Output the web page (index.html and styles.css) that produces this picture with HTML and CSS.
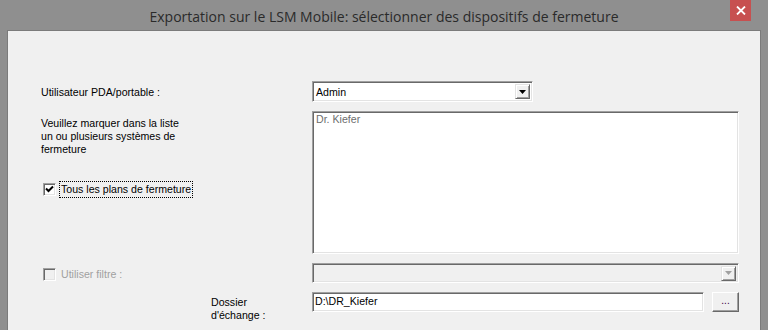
FILE: index.html
```html
<!DOCTYPE html>
<html lang="fr">
<head>
<meta charset="utf-8">
<title>Exportation sur le LSM Mobile</title>
<link rel="stylesheet" href="styles.css">
</head>
<body>
<div class="window">
  <div class="titlebar">
    <span class="title">Exportation sur le LSM Mobile: sélectionner des dispositifs de fermeture</span>
    <div class="close"><svg width="10" height="9" viewBox="0 0 10 9"><path d="M1 0.5 L9 8.5 M9 0.5 L1 8.5" stroke="#fff" stroke-width="1.8" fill="none"/></svg></div>
  </div>
  <div class="client">
    <div class="form">
      <div class="label row1">Utilisateur PDA/portable :</div>
      <div class="combo">
        <span class="combo-text">Admin</span>
        <span class="dd-btn"><svg width="7" height="4" viewBox="0 0 7 4"><path d="M0 0 H7 L3.5 4 Z" fill="#000"/></svg></span>
      </div>

      <div class="left2">
        <div class="label para">Veuillez marquer dans la liste<br>un ou plusieurs systèmes de<br>fermeture</div>
        <div class="check-row">
          <span class="checkbox"><svg width="9" height="9" viewBox="0 0 9 9"><path d="M1 3.5 L3.5 6 L8 1.5" stroke="#000" stroke-width="2" fill="none"/></svg></span>
          <span class="label focus">Tous les plans de fermeture</span>
        </div>
      </div>
      <div class="listbox">
        <div class="list-item">Dr. Kiefer</div>
      </div>

      <div class="check-row disabled-row">
        <span class="checkbox disabled"></span>
        <span class="label disabled-text">Utiliser filtre :</span>
      </div>
      <div class="combo combo-disabled">
        <span class="combo-text"></span>
        <span class="dd-btn"><svg width="7" height="4" viewBox="0 0 7 4"><path d="M0 0 H7 L3.5 4 Z" fill="#a0a0a0"/></svg></span>
      </div>

      <div class="label folder">Dossier<br>d'échange :</div>
      <div class="path-row">
        <div class="edit">D:\DR_Kiefer</div>
        <div class="btn">...</div>
      </div>
    </div>
  </div>
</div>
</body>
</html>
```
FILE: styles.css
```css
html, body {
  margin: 0;
  padding: 0;
}
body {
  width: 768px;
  height: 330px;
  overflow: hidden;
  background: #8f8f8f;
  font-family: "Liberation Sans", Arial, sans-serif;
}
.window {
  width: 768px;
  height: 330px;
  background: #8f8f8f;
  display: flex;
  flex-direction: column;
}
.titlebar {
  position: relative;
  height: 30px;
  flex: none;
  display: flex;
  align-items: center;
  justify-content: center;
}
.title {
  font-family: "Open Sans", "Noto Sans", sans-serif;
  font-size: 14px;
  color: #2a2a2a;
  margin-top: 2px;
}
.close {
  position: absolute;
  left: 730px;
  top: 0;
  width: 21px;
  height: 21px;
  background: #c75050;
  display: flex;
  align-items: center;
  justify-content: center;
}
.client {
  flex: 1;
  margin: 0 7px 0 7px;
  border: 1px solid #7b7b7b;
  border-bottom: none;
  background: #f0f0f0;
}
.form {
  display: grid;
  grid-template-columns: 271px 427px;
  grid-template-rows: 21px 143px 20px 20px;
  row-gap: 9px;
  padding: 50px 21px 0 33px;
}
.label {
  font-size: 10.6px;
  line-height: 13px;
  color: #000;
}
.row1 {
  align-self: center;
  padding-top: 1px;
}
.combo {
  width: 221px;
  box-sizing: border-box;
  height: 21px;
  background: #fff;
  border-top: 1px solid #a0a0a0;
  border-left: 1px solid #a0a0a0;
  border-right: 1px solid #fff;
  border-bottom: 1px solid #fff;
  box-shadow: inset 1px 1px 0 #696969, inset -1px -1px 0 #e3e3e3;
  display: flex;
  align-items: center;
  padding: 0 2px 0 2px;
}
.combo-text {
  flex: 1;
  font-size: 10.6px;
  color: #000;
  padding-left: 1px;
}
.dd-btn {
  width: 15px;
  height: 15px;
  box-sizing: border-box;
  background: #f0f0f0;
  border-top: 1px solid #e3e3e3;
  border-left: 1px solid #e3e3e3;
  border-right: 1px solid #696969;
  border-bottom: 1px solid #696969;
  box-shadow: inset 1px 1px 0 #fff, inset -1px -1px 0 #a0a0a0;
  display: flex;
  align-items: center;
  justify-content: center;
}
.combo-disabled {
  width: 427px;
  height: 20px;
  background: #f0f0f0;
}
.left2 {
  display: flex;
  flex-direction: column;
}
.para {
  margin-top: 6px;
  margin-left: 0;
}
.check-row {
  display: flex;
  align-items: center;
  height: 15px;
  margin-left: 2px;
  gap: 4px;
}
.left2 .check-row {
  margin-top: 26px;
}
.checkbox {
  width: 13px;
  height: 13px;
  box-sizing: border-box;
  background: #fff;
  border-top: 1px solid #a0a0a0;
  border-left: 1px solid #a0a0a0;
  border-right: 1px solid #fff;
  border-bottom: 1px solid #fff;
  box-shadow: inset 1px 1px 0 #696969, inset -1px -1px 0 #e3e3e3;
  display: flex;
  align-items: center;
  justify-content: center;
  flex: none;
}
.checkbox.disabled {
  background: #f0f0f0;
}
.focus {
  outline: 1px dotted #000;
  padding: 1px 1px 1px 1px;
  line-height: 13px;
}
.disabled-row {
  align-self: start;
  margin-top: 4px;
}
.disabled-text {
  color: #a0a0a0;
  padding-left: 1px;
}
.listbox {
  box-sizing: border-box;
  background: #fff;
  border-top: 1px solid #a0a0a0;
  border-left: 1px solid #a0a0a0;
  border-right: 1px solid #fff;
  border-bottom: 1px solid #fff;
  box-shadow: inset 1px 1px 0 #696969, inset -1px -1px 0 #e3e3e3;
  padding: 1px 3px;
}
.list-item {
  font-size: 10.6px;
  line-height: 13px;
  color: #6d6d6d;
}
.folder {
  padding-left: 170px;
  margin-top: 4px;
  height: 38px;
}
.path-row {
  display: flex;
  gap: 8px;
}
.edit {
  width: 392px;
  height: 20px;
  box-sizing: border-box;
  background: #fff;
  border-top: 1px solid #a0a0a0;
  border-left: 1px solid #a0a0a0;
  border-right: 1px solid #fff;
  border-bottom: 1px solid #fff;
  box-shadow: inset 1px 1px 0 #696969, inset -1px -1px 0 #e3e3e3;
  font-size: 10.6px;
  line-height: 16px;
  padding-left: 2px;
  color: #000;
}
.btn {
  width: 27px;
  height: 20px;
  box-sizing: border-box;
  background: #f0f0f0;
  border-top: 1px solid #fff;
  border-left: 1px solid #fff;
  border-right: 1px solid #696969;
  border-bottom: 1px solid #696969;
  box-shadow: inset -1px -1px 0 #a0a0a0;
  font-size: 10px;
  line-height: 16px;
  text-align: center;
  color: #400040;
}
```
